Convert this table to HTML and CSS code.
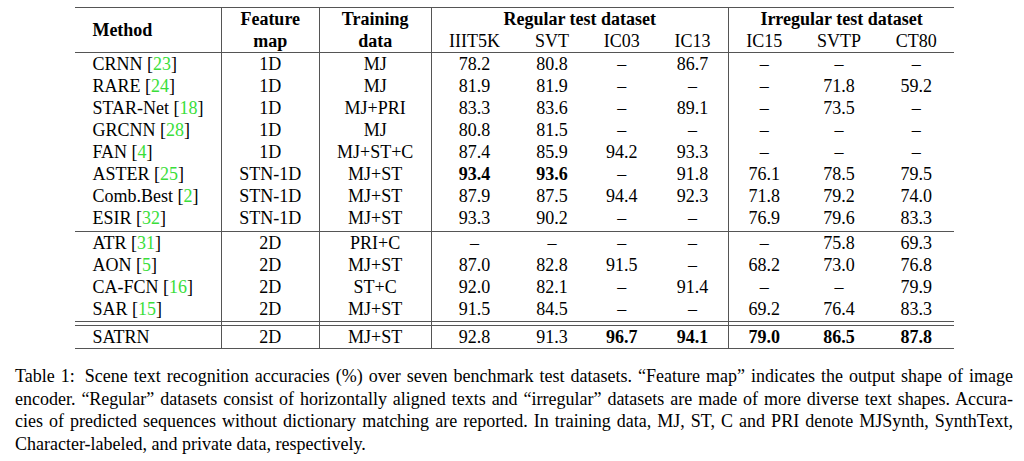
FILE: index.html
```html
<!DOCTYPE html>
<html>
<head>
<meta charset="utf-8">
<link rel="stylesheet" href="styles.css">
</head>
<body>
<table class="results">
  <thead>
    <tr>
      <th class="method vl hb" rowspan="2">Method</th>
      <th class="vl">Feature</th>
      <th class="vl">Training</th>
      <th class="vl" colspan="4">Regular test dataset</th>
      <th colspan="3">Irregular test dataset</th>
    </tr>
    <tr class="hb">
      <th class="vl">map</th>
      <th class="vl">data</th>
      <td>IIIT5K</td><td>SVT</td><td>IC03</td><td class="vl">IC13</td>
      <td>IC15</td><td>SVTP</td><td>CT80</td>
    </tr>
  </thead>
  <tbody>
    <tr><td class="method vl">CRNN [<span class="cite">23</span>]</td><td class="vl">1D</td><td class="vl">MJ</td><td>78.2</td><td>80.8</td><td>–</td><td class="vl">86.7</td><td>–</td><td>–</td><td>–</td></tr>
    <tr><td class="method vl">RARE [<span class="cite">24</span>]</td><td class="vl">1D</td><td class="vl">MJ</td><td>81.9</td><td>81.9</td><td>–</td><td class="vl">–</td><td>–</td><td>71.8</td><td>59.2</td></tr>
    <tr><td class="method vl">STAR-Net [<span class="cite">18</span>]</td><td class="vl">1D</td><td class="vl">MJ+PRI</td><td>83.3</td><td>83.6</td><td>–</td><td class="vl">89.1</td><td>–</td><td>73.5</td><td>–</td></tr>
    <tr><td class="method vl">GRCNN [<span class="cite">28</span>]</td><td class="vl">1D</td><td class="vl">MJ</td><td>80.8</td><td>81.5</td><td>–</td><td class="vl">–</td><td>–</td><td>–</td><td>–</td></tr>
    <tr><td class="method vl">FAN [<span class="cite">4</span>]</td><td class="vl">1D</td><td class="vl">MJ+ST+C</td><td>87.4</td><td>85.9</td><td>94.2</td><td class="vl">93.3</td><td>–</td><td>–</td><td>–</td></tr>
    <tr><td class="method vl">ASTER [<span class="cite">25</span>]</td><td class="vl">STN-1D</td><td class="vl">MJ+ST</td><td><b>93.4</b></td><td><b>93.6</b></td><td>–</td><td class="vl">91.8</td><td>76.1</td><td>78.5</td><td>79.5</td></tr>
    <tr><td class="method vl">Comb.Best [<span class="cite">2</span>]</td><td class="vl">STN-1D</td><td class="vl">MJ+ST</td><td>87.9</td><td>87.5</td><td>94.4</td><td class="vl">92.3</td><td>71.8</td><td>79.2</td><td>74.0</td></tr>
    <tr class="group-end"><td class="method vl">ESIR [<span class="cite">32</span>]</td><td class="vl">STN-1D</td><td class="vl">MJ+ST</td><td>93.3</td><td>90.2</td><td>–</td><td class="vl">–</td><td>76.9</td><td>79.6</td><td>83.3</td></tr>
    <tr><td class="method vl">ATR [<span class="cite">31</span>]</td><td class="vl">2D</td><td class="vl">PRI+C</td><td>–</td><td>–</td><td>–</td><td class="vl">–</td><td>–</td><td>75.8</td><td>69.3</td></tr>
    <tr><td class="method vl">AON [<span class="cite">5</span>]</td><td class="vl">2D</td><td class="vl">MJ+ST</td><td>87.0</td><td>82.8</td><td>91.5</td><td class="vl">–</td><td>68.2</td><td>73.0</td><td>76.8</td></tr>
    <tr><td class="method vl">CA-FCN [<span class="cite">16</span>]</td><td class="vl">2D</td><td class="vl">ST+C</td><td>92.0</td><td>82.1</td><td>–</td><td class="vl">91.4</td><td>–</td><td>–</td><td>79.9</td></tr>
    <tr class="pre-double"><td class="method vl">SAR [<span class="cite">15</span>]</td><td class="vl">2D</td><td class="vl">MJ+ST</td><td>91.5</td><td>84.5</td><td>–</td><td class="vl">–</td><td>69.2</td><td>76.4</td><td>83.3</td></tr>
    <tr class="double"><td class="vl"></td><td class="vl"></td><td class="vl"></td><td></td><td></td><td></td><td class="vl"></td><td></td><td></td><td></td></tr>
    <tr class="last"><td class="method vl">SATRN</td><td class="vl">2D</td><td class="vl">MJ+ST</td><td>92.8</td><td>91.3</td><td><b>96.7</b></td><td class="vl"><b>94.1</b></td><td><b>79.0</b></td><td><b>86.5</b></td><td><b>87.8</b></td></tr>
  </tbody>
</table>

<p class="caption">
  <span class="line"><span class="label">Table 1:</span> Scene text recognition accuracies (%) over seven benchmark test datasets. “Feature map” indicates the output shape of image</span>
  <span class="line">encoder. “Regular” datasets consist of horizontally aligned texts and “irregular” datasets are made of more diverse text shapes. Accura-</span>
  <span class="line">cies of predicted sequences without dictionary matching are reported. In training data, MJ, ST, C and PRI denote MJSynth, SynthText,</span>
  <span class="line end">Character-labeled, and private data, respectively.</span>
</p>
</body>
</html>
```

FILE: styles.css
```css
html, body {
  margin: 0;
  padding: 0;
  background: #ffffff;
}

body {
  font-family: "Liberation Serif", "Times New Roman", serif;
  color: #000000;
  font-size: 18px;
}

.results {
  margin: 7px 0 0 75px;
  border-collapse: separate;
  border-spacing: 0;
  border-top: 1px solid #555;
}

.results th,
.results td {
  padding: 0 17.4px;
  line-height: 22px;
  height: 22px;
  text-align: center;
  white-space: nowrap;
  font-weight: normal;
}

.results th {
  font-weight: bold;
}

.results .method {
  text-align: left;
}

.results .vl {
  border-right: 1px solid #555;
}

.results .hb,
.results tr.hb > * {
  border-bottom: 1px solid #555;
}

.results tr.group-end > td {
  padding-bottom: 2px;
  border-bottom: 1px solid #555;
}

.results tr.pre-double > td {
  padding-bottom: 1px;
}

.results tr.double > td {
  height: 3px;
  line-height: 0;
  padding: 0;
  border-top: 1px solid #555;
  border-bottom: 1px solid #555;
}

.results tr.last > td {
  border-bottom: 1px solid #555;
}

.cite {
  color: #3ade3a;
}

.caption {
  margin: 16px 0 0 15px;
  width: 998px;
  font-size: 18px;
  line-height: 22.6px;
}

.caption .line {
  display: block;
  text-align: justify;
  text-align-last: justify;
}

.caption .line.end {
  text-align-last: left;
}

.caption .label {
  margin-right: 4px;
}
```
